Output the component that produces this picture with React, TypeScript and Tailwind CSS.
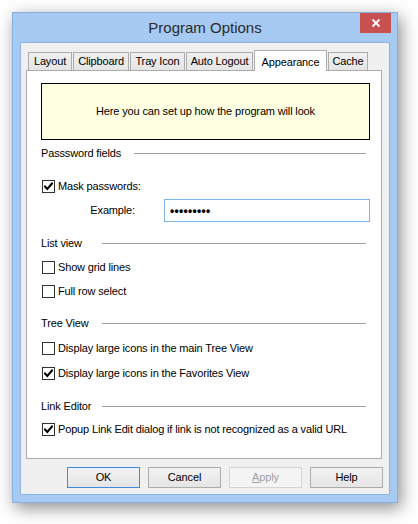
import React from "react";

// Win8-style "Program Options" dialog, Appearance tab selected.

const tabs = [
  { label: "Layout", w: "w-[44px]" },
  { label: "Clipboard", w: "w-[56px]" },
  { label: "Tray Icon", w: "w-[55px]" },
  { label: "Auto Logout", w: "w-[67px]" },
  { label: "Appearance", w: "w-[73px]", active: true },
  { label: "Cache", w: "w-[40px]" },
];

function CheckBox({ checked }: { checked?: boolean }) {
  return (
    <span className="ml-px flex h-[13px] w-[13px] shrink-0 items-center justify-center border border-[#333333] bg-white">
      {checked && (
        <svg width="9" height="9" viewBox="0 0 9 9" fill="none">
          <path d="M1 4.5L3.3 7L8 1.5" stroke="#000" strokeWidth="2.1" strokeLinecap="square" />
        </svg>
      )}
    </span>
  );
}

function CheckRow({ label, checked, className = "" }: { label: string; checked?: boolean; className?: string }) {
  return (
    <div className={`flex h-[20px] items-center ${className}`}>
      <CheckBox checked={checked} />
      <span className="ml-[3px] whitespace-nowrap">{label}</span>
    </div>
  );
}

function GroupHeader({ label, first, className = "" }: { label: string; first?: boolean; className?: string }) {
  return (
    <div className={`flex h-[20px] items-center pr-[4px] ${className}`}>
      <span className={first ? "whitespace-nowrap" : "w-[61px] whitespace-nowrap"}>{label}</span>
      <span className={`h-px flex-1 bg-[#a0a0a0] ${first ? "ml-[13px]" : ""}`} />
    </div>
  );
}

function DlgButton({ label, primary, disabled }: { label: React.ReactNode; primary?: boolean; disabled?: boolean }) {
  const look = disabled
    ? "border-[#d5d5d5] bg-[#f4f4f4] text-[#a0a0a0]"
    : primary
      ? "border-[#3c8be0] bg-gradient-to-b from-[#f2f2f2] to-[#e5e5e5] text-black"
      : "border-[#acacac] bg-gradient-to-b from-[#f2f2f2] to-[#e5e5e5] text-black";
  return (
    <button className={`flex h-[21px] w-[73px] items-center justify-center border ${look}`}>{label}</button>
  );
}

export default function App() {
  return (
    <div className="h-[524px] w-[418px] bg-white pl-[12px] pt-[12px] font-['Liberation_Sans',Arial,sans-serif] text-[11px] tracking-[-0.15px] text-black">
      <div className="flex h-[491px] w-[386px] flex-col border border-[#86afe0] bg-[#a6caf2] shadow-[3px_5px_16px_rgba(0,0,0,0.45)]">
        {/* Title bar */}
        <div className="relative flex h-[29px] shrink-0 items-center justify-center pt-[2px]">
          <span className="text-[15px] tracking-normal text-[#2b2b2b]">Program Options</span>
          <button className="absolute right-[6px] top-0 flex h-[20px] w-[31px] items-center justify-center bg-[#c75050]">
            <svg width="10" height="10" viewBox="0 0 10 10" fill="none">
              <path d="M1.5 1.5l7 7M8.5 1.5l-7 7" stroke="#fff" strokeWidth="1.8" />
            </svg>
          </button>
        </div>

        {/* Client area */}
        <div className="mx-[7px] mb-[7px] flex flex-1 flex-col border border-[#8fb4df] bg-[#f0f0f0] pl-[5px] pr-[7px] pt-[7px]">
          {/* Tabs */}
          <div className="flex h-[20px] items-end gap-px pl-[2px]">
            {tabs.map((t) =>
              t.active ? (
                <div
                  key={t.label}
                  className={`relative z-10 -mb-px flex h-[21px] ${t.w} items-start justify-center border border-b-0 border-[#acacac] bg-white pt-[3px]`}
                >
                  {t.label}
                </div>
              ) : (
                <div
                  key={t.label}
                  className={`flex h-[18px] ${t.w} items-center justify-center border border-b-0 border-[#acacac] bg-gradient-to-b from-[#f0f0f0] to-[#e5e5e5]`}
                >
                  {t.label}
                </div>
              ),
            )}
          </div>

          {/* Tab panel */}
          <div className="flex h-[389px] flex-col border border-[#acacac] bg-white pl-[14px] pr-[11px] pt-[12px]">
            <div className="flex h-[57px] items-center justify-center border border-black bg-[#ffffe1]">
              Here you can set up how the program will look
            </div>

            <GroupHeader label="Passsword fields" first className="mt-[3px]" />
            <CheckRow label="Mask passwords:" checked className="mt-[13px]" />
            <div className="mt-[3px] flex h-[23px] items-center">
              <span className="w-[94px] text-right">Example:</span>
              <div className="ml-[29px] flex h-[23px] flex-1 items-center border border-[#7eb4ea] bg-white pl-[5px] text-[12px] font-bold tracking-[0.3px]">
                •••••••••
              </div>
            </div>

            <GroupHeader label="List view" className="mt-[11px]" />
            <CheckRow label="Show grid lines" className="mt-[4px]" />
            <CheckRow label="Full row select" className="mt-[4px]" />

            <GroupHeader label="Tree View" className="mt-[12px]" />
            <CheckRow label="Display large icons in the main Tree View" className="mt-[5px]" />
            <CheckRow label="Display large icons in the Favorites View" checked className="mt-[5px]" />

            <GroupHeader label="Link Editor" className="mt-[13px]" />
            <CheckRow label="Popup Link Edit dialog if link is not recognized as a valid URL" checked className="mt-[3px]" />
          </div>

          {/* Buttons */}
          <div className="-mr-px mt-[8px] flex justify-end gap-[8px]">
            <DlgButton label="OK" primary />
            <DlgButton label="Cancel" />
            <DlgButton
              label={
                <span>
                  <span className="underline">A</span>pply
                </span>
              }
              disabled
            />
            <DlgButton label="Help" />
          </div>
        </div>
      </div>
    </div>
  );
}
